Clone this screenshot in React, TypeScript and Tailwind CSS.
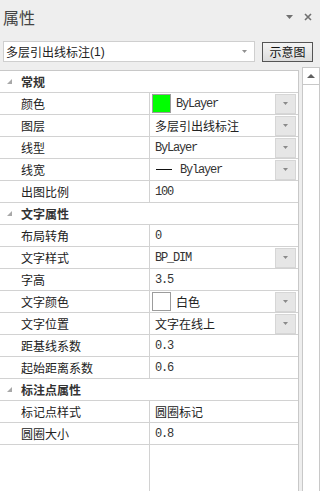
import React from "react";

const CJK = { fontFamily: '"Noto Sans CJK SC", sans-serif' };
const MONO = { fontFamily: '"Liberation Mono", monospace' };

function Tri({ color = "#8a8a8a" }: { color?: string }) {
  return (
    <svg width="5" height="3" viewBox="0 0 5 3">
      <path d="M0 0H5L2.5 3Z" fill={color} />
    </svg>
  );
}

function DD() {
  return (
    <div className="ml-auto mr-[2px] flex h-[20px] w-[21px] shrink-0 items-center justify-center border border-[#d6d6d6] bg-[#e6e6e6]">
      <Tri />
    </div>
  );
}

type Row =
  | { cat: string }
  | { name: string; value: React.ReactNode; dd?: boolean };

const mono = (t: string) => (
  <span className="ml-[3px] text-[12px] tracking-[-1.2px] text-[#333]" style={MONO}>
    {t}
  </span>
);
const cjk = (t: string) => (
  <span className="ml-[3px] text-[12px] text-[#222]" style={CJK}>
    {t}
  </span>
);

const rows: Row[] = [
  { cat: "常规" },
  {
    name: "颜色",
    dd: true,
    value: (
      <>
        <div className="h-[19px] w-[19px] shrink-0 border border-[#9c9c9c] bg-[#00ff00]" />
        <span className="ml-[5px] text-[12px] tracking-[-1.2px] text-[#333]" style={MONO}>
          ByLayer
        </span>
      </>
    ),
  },
  { name: "图层", dd: true, value: cjk("多层引出线标注") },
  { name: "线型", dd: true, value: mono("ByLayer") },
  {
    name: "线宽",
    dd: true,
    value: (
      <>
        <div className="ml-[4px] h-[1px] w-[16px] bg-[#111]" />
        <span className="ml-[8px] text-[12px] tracking-[-1.2px] text-[#333]" style={MONO}>
          Bylayer
        </span>
      </>
    ),
  },
  { name: "出图比例", value: mono("100") },
  { cat: "文字属性" },
  { name: "布局转角", value: mono("0") },
  { name: "文字样式", dd: true, value: mono("BP_DIM") },
  { name: "字高", value: mono("3.5") },
  {
    name: "文字颜色",
    dd: true,
    value: (
      <>
        <div className="h-[19px] w-[19px] shrink-0 border border-[#9c9c9c] bg-white" />
        <span className="ml-[5px] text-[12px] text-[#222]" style={CJK}>
          白色
        </span>
      </>
    ),
  },
  { name: "文字位置", dd: true, value: cjk("文字在线上") },
  { name: "距基线系数", value: mono("0.3") },
  { name: "起始距离系数", value: mono("0.6") },
  { cat: "标注点属性" },
  { name: "标记点样式", value: cjk("圆圈标记") },
  { name: "圆圈大小", value: mono("0.8") },
];

export default function App() {
  return (
    <div className="flex h-[491px] w-[320px] flex-col overflow-hidden bg-[#eeeeee]" style={CJK}>
      {/* title */}
      <div className="flex h-[34px] shrink-0 items-center justify-between pl-[3px] pr-[8px]">
        <span className="text-[16px] leading-none text-[#444]" style={CJK}>
          属性
        </span>
        <div className="flex items-center gap-[11px]">
          <svg width="7" height="4" viewBox="0 0 7 4">
            <path d="M0 0H7L3.5 4Z" fill="#707070" />
          </svg>
          <svg width="8" height="8" viewBox="0 0 8 8">
            <path d="M1 1L7 7M7 1L1 7" stroke="#707070" strokeWidth="1.6" />
          </svg>
        </div>
      </div>
      {/* combo row */}
      <div className="mt-[7px] flex h-[21px] shrink-0 items-start">
        <div className="ml-[3px] flex h-[21px] w-[252px] items-center border border-[#cfcfcf] bg-white pl-[2px] pr-[7px]">
          <span className="text-[12px] text-[#222]" style={CJK}>
            多层引出线标注
          </span>
          <span className="text-[12px] text-[#222]" style={{ fontFamily: '"Liberation Sans", sans-serif' }}>
            (1)
          </span>
          <div className="ml-auto">
            <Tri color="#909090" />
          </div>
        </div>
        <div className="ml-[7px] mt-[1px] flex h-[20px] w-[51px] items-center justify-center border border-[#555] bg-gradient-to-b from-[#f4f4f4] to-[#dcdcdc] text-[12px] text-[#111]">
          示意图
        </div>
      </div>
      {/* body */}
      <div className="mt-[5px] flex min-h-0 flex-1">
        <div className="mt-[3px] flex w-[299px] flex-col border-r border-t border-[#c8c8c8] bg-white">
          {rows.map((r, i) =>
            "cat" in r ? (
              <div key={i} className="flex h-[22px] shrink-0 items-center border-b border-[#d2d2d2]">
                <svg className="ml-[7px]" width="5" height="5" viewBox="0 0 5 5">
                  <path d="M5 0V5H0Z" fill="#a8a8a8" />
                </svg>
                <span className="ml-[9px] text-[12px] font-bold text-[#333]" style={CJK}>
                  {r.cat}
                </span>
              </div>
            ) : (
              <div key={i} className="flex h-[22px] shrink-0 border-b border-[#d2d2d2]">
                <div className="flex w-[150px] shrink-0 items-center border-r border-[#d2d2d2] pl-[21px]">
                  <span className="text-[12px] text-[#222]" style={CJK}>
                    {r.name}
                  </span>
                </div>
                <div className="flex min-w-0 flex-1 items-center pl-[2px]">
                  {r.value}
                  {r.dd && <DD />}
                </div>
              </div>
            )
          )}
          <div className="flex flex-1">
            <div className="w-[150px] border-r border-[#d2d2d2]" />
          </div>
        </div>
        <div className="ml-[3px] flex w-[18px] flex-col border-l border-r border-t border-[#c8c8c8] bg-white">
          <div className="flex h-[17px] items-center justify-center border-b border-[#c8c8c8]">
            <svg width="8" height="4" viewBox="0 0 8 4">
              <path d="M0 4H8L4 0Z" fill="#606060" />
            </svg>
          </div>
        </div>
      </div>
    </div>
  );
}
